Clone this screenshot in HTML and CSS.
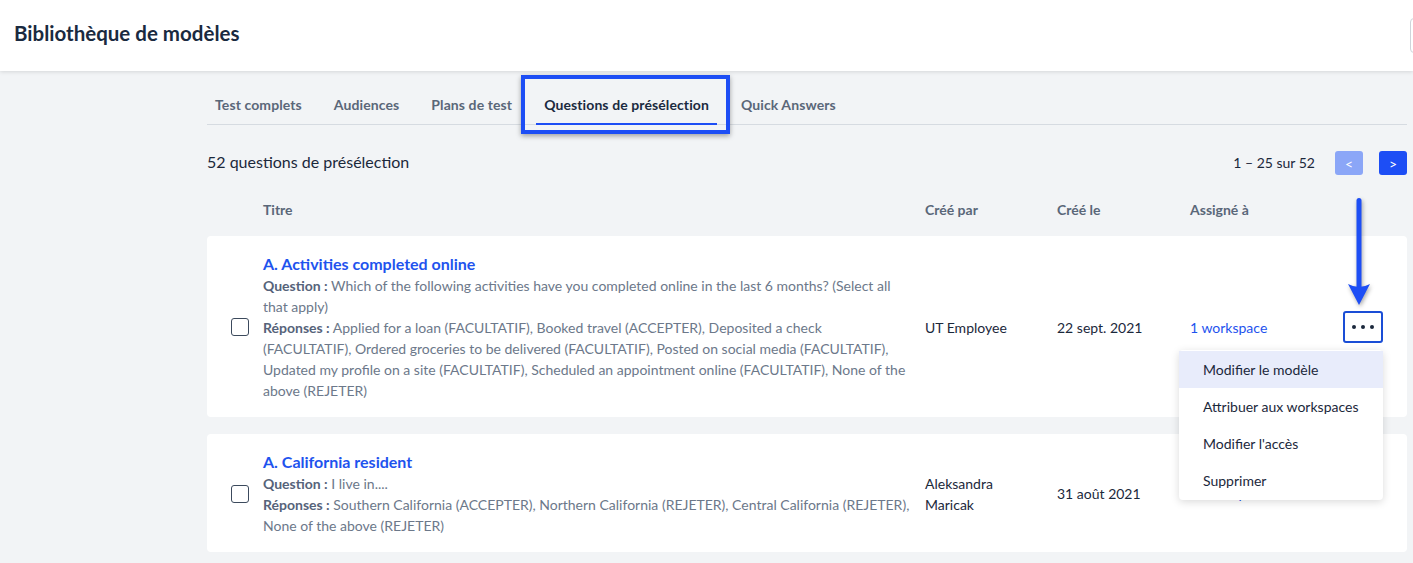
FILE: index.html
```html
<!DOCTYPE html>
<html lang="fr">
<head>
    <meta charset="UTF-8">
    <meta name="viewport" content="width=device-width, initial-scale=1.0">
    <title>Bibliothèque de modèles</title>
    <link rel="stylesheet" href="styles.css">
</head>
<body>
    <header class="topbar">
        <h1>Bibliothèque de modèles</h1>
        <button class="topbar-btn"></button>
    </header>

    <main class="library">
        <nav class="tabs">
            <a class="tab">Test complets</a>
            <a class="tab">Audiences</a>
            <a class="tab">Plans de test</a>
            <a class="tab active">Questions de présélection<span class="callout"></span></a>
            <a class="tab">Quick Answers</a>
        </nav>

        <div class="summary">
            <span class="count">52 questions de présélection</span>
            <div class="pager">
                <span class="range">1 – 25 sur 52</span>
                <button class="page-btn disabled">&lt;</button>
                <button class="page-btn">&gt;</button>
            </div>
        </div>

        <div class="row head">
            <span></span>
            <span>Titre</span>
            <span>Créé par</span>
            <span>Créé le</span>
            <span>Assigné à</span>
            <span></span>
        </div>

        <div class="row card">
            <span class="check"></span>
            <div class="info">
                <div class="title">A. Activities completed online</div>
                <div class="detail"><b>Question :</b> Which of the following activities have you completed online in the last 6 months? (Select all that apply)</div>
                <div class="detail"><b>Réponses :</b> Applied for a loan (FACULTATIF), Booked travel (ACCEPTER), Deposited a check (FACULTATIF), Ordered groceries to be delivered (FACULTATIF), Posted on social media (FACULTATIF), Updated my profile on a site (FACULTATIF), Scheduled an appointment online (FACULTATIF), None of the above (REJETER)</div>
            </div>
            <span class="cell author">UT Employee</span>
            <span class="cell">22 sept. 2021</span>
            <span class="cell link">1 workspace</span>
            <div class="actions">
                <svg class="arrow" width="24" height="110" viewBox="0 0 24 110">
                    <rect x="9.5" y="1" width="5" height="92" rx="2.5" fill="#1d4ef5"/>
                    <path d="M1 87 Q12 93 23 87 L12 108 Z" fill="#1d4ef5"/>
                </svg>
                <button class="kebab"><i></i><i></i><i></i></button>
                <div class="menu">
                    <div class="menu-item current">Modifier le modèle</div>
                    <div class="menu-item">Attribuer aux workspaces</div>
                    <div class="menu-item">Modifier l'accès</div>
                    <div class="menu-item">Supprimer</div>
                </div>
            </div>
        </div>

        <div class="row card">
            <span class="check"></span>
            <div class="info">
                <div class="title">A. California resident</div>
                <div class="detail"><b>Question :</b> I live in....</div>
                <div class="detail"><b>Réponses :</b> Southern California (ACCEPTER), Northern California (REJETER), Central California (REJETER), None of the above (REJETER)</div>
            </div>
            <span class="cell author">Aleksandra Maricak</span>
            <span class="cell">31 août 2021</span>
            <span class="cell link">1 workspace</span>
            <div class="actions"></div>
        </div>
    </main>
</body>
</html>
```

FILE: styles.css
```css
body {
    margin: 0;
    font-family: Lato, "Open Sans", sans-serif;
    background-color: #f2f4f6;
    color: #1b283b;
    overflow: hidden;
}
.topbar {
    position: relative;
    z-index: 1;
    height: 71px;
    display: flex;
    align-items: center;
    padding-left: 14px;
    background: #fff;
    box-shadow: 0 1px 4px rgba(0, 0, 0, 0.12);
}
.topbar h1 {
    flex: 1;
    margin: 0 0 5px;
    font-size: 20.5px;
    font-weight: 700;
    color: #1a2a40;
}
.topbar-btn {
    width: 80px;
    height: 35px;
    margin-right: -77px;
    border: 1px solid #cfd4da;
    border-radius: 4px;
    background: #fff;
}
.library {
    width: 1200px;
    margin-left: 207px;
}
.tabs {
    display: flex;
    gap: 16px;
    margin-top: 19px;
    border-bottom: 1px solid #d6dbe1;
}
.tab {
    position: relative;
    padding: 7px 8px 10px;
    margin-bottom: -1px;
    font-size: 14px;
    font-weight: 700;
    line-height: 16px;
    letter-spacing: 0.1px;
    color: #5a6779;
    border-bottom: 2px solid transparent;
}
.tab.active {
    color: #1a2a40;
    border-bottom-color: #1d4ef5;
}
.callout {
    position: absolute;
    left: -15px;
    right: -13px;
    top: -15px;
    bottom: -11px;
    border: 4px solid #1d4ef5;
    box-shadow: 0 2px 5px rgba(0, 0, 0, 0.35);
}
.summary {
    display: flex;
    justify-content: space-between;
    align-items: center;
    height: 24px;
    margin-top: 26px;
}
.count {
    font-size: 16px;
    margin-bottom: 3px;
}
.pager {
    display: flex;
    align-items: center;
    gap: 16px;
    font-size: 14px;
}
.range {
    margin-right: 4px;
    margin-bottom: 2px;
}
.page-btn {
    width: 28px;
    height: 24px;
    border: none;
    border-radius: 3px;
    background: #1d4ef5;
    color: #fff;
    font-family: Lato, sans-serif;
    font-size: 14px;
}
.page-btn.disabled {
    background: #8ba6f7;
}
.row {
    display: grid;
    grid-template-columns: 56px 662px 132px 133px 1fr 40px;
    align-items: center;
    padding-right: 24px;
}
.head {
    height: 26px;
    margin: 21px 0 14px;
    font-size: 14px;
    font-weight: 700;
    color: #5a6779;
}
.card {
    padding-top: 17px;
    padding-bottom: 16px;
    margin-bottom: 17px;
    background: #fff;
    border-radius: 4px;
}
.check {
    width: 18px;
    height: 18px;
    margin-left: 24px;
    box-sizing: border-box;
    border: 1.5px solid #3c4a5d;
    border-radius: 3px;
}
.info {
    padding-right: 12px;
}
.title {
    font-size: 16px;
    font-weight: 700;
    line-height: 22px;
    color: #1e53ee;
}
.detail {
    font-size: 14px;
    line-height: 21px;
    color: #6c788a;
}
.detail b {
    color: #56637a;
}
.cell {
    font-size: 14px;
    line-height: 21px;
}
.author {
    padding-right: 40px;
}
.link {
    color: #1e53ee;
}
.actions {
    position: relative;
    height: 32px;
}
.kebab {
    width: 40px;
    height: 32px;
    display: flex;
    align-items: center;
    justify-content: center;
    gap: 5px;
    padding: 0;
    border: 2px solid #1a4ed6;
    border-radius: 3px;
    background: #fff;
}
.kebab i {
    width: 4px;
    height: 4px;
    border-radius: 50%;
    background: #1b283b;
}
.arrow {
    position: absolute;
    left: 50%;
    bottom: calc(100% + 4px);
    margin-left: -16px;
    filter: drop-shadow(1px 2px 2px rgba(0, 0, 0, 0.35));
}
.menu {
    position: absolute;
    z-index: 5;
    right: 0;
    top: calc(100% + 7px);
    width: 204px;
    padding: 1px 0;
    background: #fff;
    border-radius: 4px;
    box-shadow: 0 2px 8px rgba(0, 0, 0, 0.15);
}
.menu-item {
    height: 37px;
    line-height: 37px;
    padding-left: 24px;
    font-size: 14px;
}
.menu-item.current {
    background: #e8ecfb;
}
```
